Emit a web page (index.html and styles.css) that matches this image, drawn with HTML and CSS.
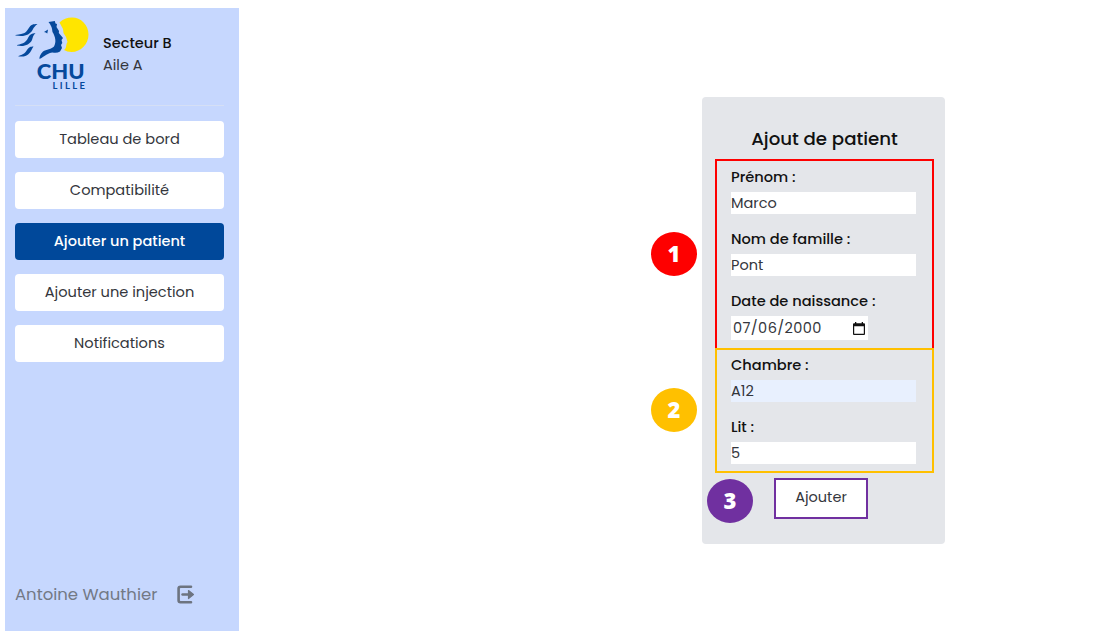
FILE: index.html
```html
<!DOCTYPE html>
<html lang="fr">
<head>
<meta charset="utf-8">
<title>Ajout de patient</title>
<link rel="stylesheet" href="styles.css">
</head>
<body>
<aside class="sidebar">
  <header class="brand">
    <svg class="logo" width="74" height="76" viewBox="0 0 74 76" role="img" aria-label="CHU Lille">
      <path class="yellow" d="M44.500 7.500C48 4 52 2.500 57 2.500C66 2.500 73.500 10 73.500 19.500C73.500 29 66 37 56.500 37Q52 37 49 35C52 33 50.500 30 52.500 27L51 22L48.500 18L48 14Z"/>
      <path class="blue" d="M33.500 7L39.800 6L40.500 8.500L42 9L41.500 12L44 16L43.800 18L48 23L46.500 25L47.300 28L46 30L47 33L45 36.500Q42 38.500 37.500 37.500C33 38 30 41 24.500 44Q24 40.500 28 36.500C31 34.500 37 34 39 31.500C41.500 27 40.500 22 37.500 17Q37 11 33.500 7Z"/>
      <path class="blue" d="M29 17L33 14.500L32.300 18.500L30.800 17.500Z"/>
      <g class="waves">
        <path d="M.5 20C10 18.500 10.500 18 13.500 13.500C16 9.500 18 9 22.500 9C20 11 19 12 17.500 15C14.500 20 10 22 .5 20.500Z"/>
        <path d="M2 30C9 28.500 11 27 13 23C15 19 17 18.500 20.500 18C18 20.500 18 22 17 25C14.500 30 9 32 2 30.500Z"/>
        <path d="M3.500 41C9 39 10 38 12 35C14 32 15.500 31.500 18.500 31.500C16.500 34 17 35 15 37.500C12 41 9 42 3.500 41.500Z"/>
      </g>
      <text class="logo-chu" x="21.800" y="63.900" textLength="47.800" lengthAdjust="spacingAndGlyphs">CHU</text>
      <text class="logo-lille" x="37.500" y="73.700" textLength="32.500">LILLE</text>
    </svg>
    <div class="unit"><strong>Secteur B</strong><span>Aile A</span></div>
  </header>
  <nav class="menu">
    <a class="item">Tableau de bord</a>
    <a class="item">Compatibilité</a>
    <a class="item active">Ajouter un patient</a>
    <a class="item">Ajouter une injection</a>
    <a class="item">Notifications</a>
  </nav>
  <footer class="account">
    <span>Antoine Wauthier</span>
    <svg width="18" height="19" viewBox="0 0 18 19" fill="none" stroke="#6d7480" stroke-width="2.600" stroke-linecap="round" stroke-linejoin="round">
      <path d="M14 1.800H3.500Q1.600 1.800 1.600 3.500V15.500Q1.600 17.200 3.500 17.200H14"/>
      <path d="M5.500 9.500H13" stroke-width="2.400"/><path fill="#6d7480" stroke-width="1.200" d="M11.500 5.500L16.500 9.500L11.500 13.500Z"/>
    </svg>
  </footer>
</aside>
<main class="content">
  <form class="card">
    <h1 class="title">Ajout de patient</h1>
    <section class="group identity">
      <span class="badge badge-1">1</span>
      <div class="label">Prénom :</div><div class="field">Marco</div>
      <div class="label">Nom de famille :</div><div class="field">Pont</div>
      <div class="label">Date de naissance :</div>
      <div class="field date"><span>07/06/2000</span>
        <svg width="12" height="13" viewBox="0 0 12 13"><path fill="#111" fill-rule="evenodd" d="M2 0H3.300V1.300H8.700V0H10V1.300H11Q12 1.300 12 2.300V12Q12 13 11 13H1Q0 13 0 12V2.300Q0 1.300 1 1.300H2ZM1.200 4.300V11.800H10.800V4.300Z"/></svg>
      </div>
    </section>
    <section class="group place">
      <span class="badge badge-2">2</span>
      <div class="label">Chambre :</div><div class="field filled">A12</div>
      <div class="label">Lit :</div><div class="field">5</div>
    </section>
    <div class="actions"><span class="badge badge-3">3</span><button class="submit" type="button">Ajouter</button></div>
  </form>
</main>
</body>
</html>
```
FILE: styles.css
```css
* { box-sizing: border-box; }
body {
  margin: 0;
  height: 633px;
  display: flex;
  overflow: hidden;
  background: #fff;
  color: #34363c;
  font: 400 14.5px/22px Poppins, Inter, sans-serif;
}
.sidebar {
  width: 234px;
  height: 623px;
  margin: 8px 0 0 5px;
  padding: 7px 15px 0 10px;
  display: flex;
  flex-direction: column;
  background: #c6d7fe;
}
.brand {
  height: 91px;
  display: flex;
  gap: 14px;
  border-bottom: 1px solid #d5dff5;
}
.logo { flex: none; }
.yellow { fill: #ffe500; }
.blue, .waves { fill: #05499c; }
.logo-chu { font: 900 20.5px Lato, sans-serif; fill: #05499c; }
.logo-lille { font: 700 9.5px Lato, sans-serif; fill: #05499c; }
.unit { display: flex; flex-direction: column; padding-top: 17px; }
.unit strong { font-weight: 500; color: #111; }
.menu { display: grid; gap: 14.5px; margin-top: 15px; }
.item {
  height: 36.5px;
  border-radius: 4px;
  background: #fff;
  text-align: center;
  line-height: 36px;
  font-size: 14.6px;
}
.active { background: #00489a; color: #fff; font-size: 14.5px; font-weight: 500; }
.account {
  margin-top: auto;
  height: 73px;
  display: flex;
  align-items: center;
  gap: 20px;
  color: #737985;
  font-size: 16.5px;
}
.content { padding: 97px 0 0 463px; }
.card {
  width: 243px;
  height: 447px;
  padding: 30px 11px 0 13px;
  border-radius: 4px;
  background: #e4e6ea;
}
.title {
  margin: 0;
  height: 32px;
  line-height: 24px;
  text-align: center;
  font-size: 18.2px;
  font-weight: 500;
  color: #111;
}
.group { position: relative; padding: 5px 16px 0 14px; border: 2px solid; }
.identity { height: 189px; border-color: #fe0000; border-bottom: 0; }
.place { height: 125px; border-color: #ffc000; padding-top: 4px; }
.label { height: 26px; line-height: 22px; font-size: 14.6px; font-weight: 500; color: #111; }
.field { height: 22px; margin-bottom: 14px; background: #fff; line-height: 22px; }
.filled { background: #e8f0fe; }
.date {
  width: 137px;
  height: 24px;
  padding: 0 3px 0 2px;
  display: flex;
  justify-content: space-between;
  align-items: center;
  letter-spacing: .4px;
}
.badge {
  position: absolute;
  width: 46px;
  height: 44px;
  border-radius: 50%;
  color: #fff;
  text-align: center;
  font: 800 22px/42px "Open Sans", "Noto Sans", sans-serif;
}
.badge-1 { left: -66px; top: 71px; background: #fe0000; }
.badge-2 { left: -66px; top: 38px; background: #ffc000; }
.badge-3 { left: -8px; top: 6px; background: #7030a0; }
.actions { position: relative; padding: 5px 0 0 59px; }
.submit {
  display: block;
  width: 94px;
  height: 41px;
  padding: 0 0 3px;
  border: 2px solid #7030a0;
  background: #fff;
  color: #34363c;
  font: inherit;
}
```
